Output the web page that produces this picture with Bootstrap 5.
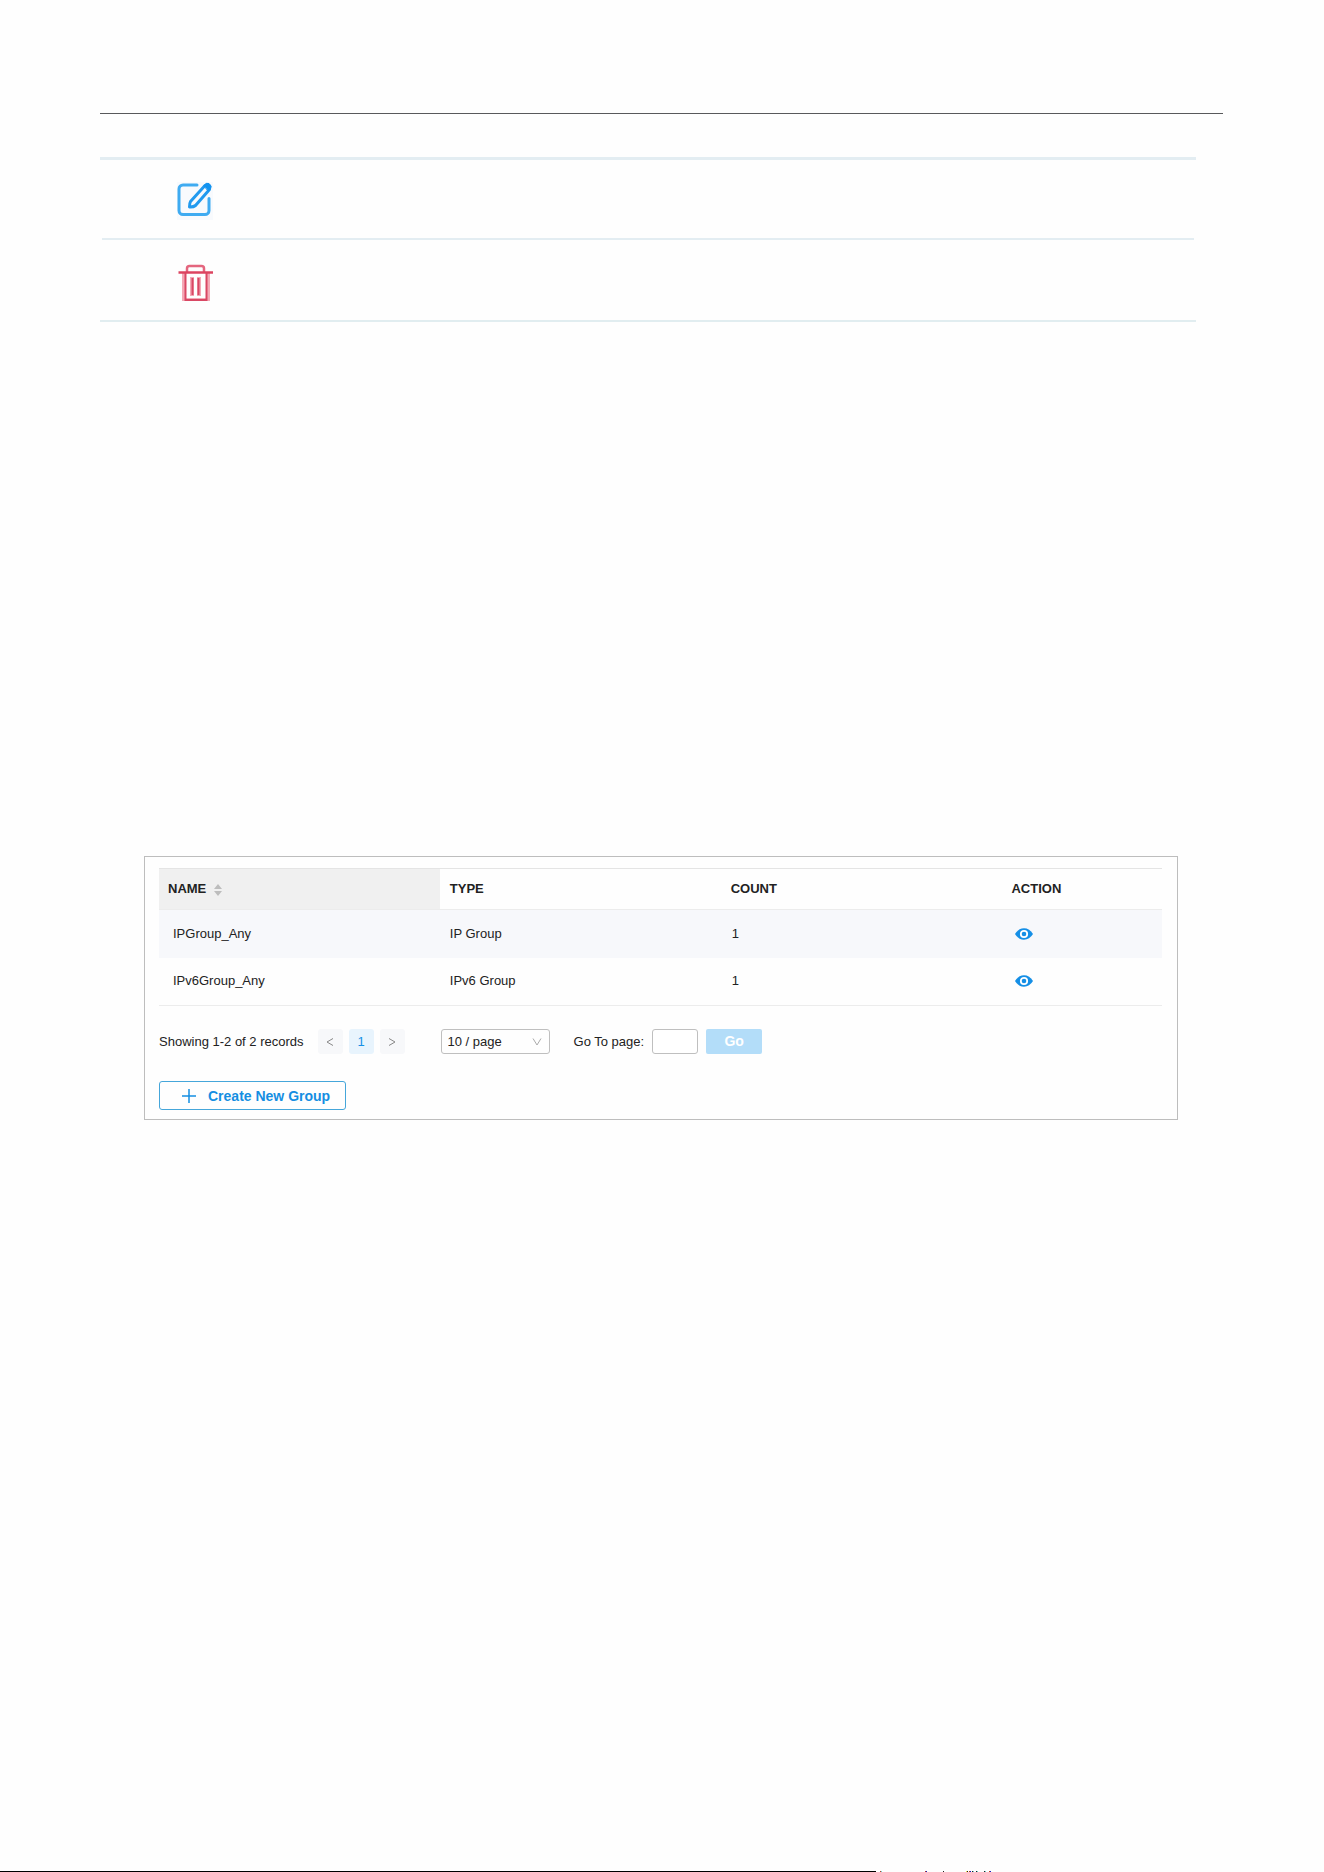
<!DOCTYPE html>
<html lang="en">
<head>
  <meta charset="UTF-8" />
  <meta name="viewport" content="width=device-width, initial-scale=1.0"/>
  <title>IP Groups</title>
  <link href="https://cdn.jsdelivr.net/npm/bootstrap@5.3.0/dist/css/bootstrap.min.css" rel="stylesheet">
  <style>
    body {
      font-family: "Liberation Sans", Arial, sans-serif;
      font-size: 13px;
      line-height: 20px;
      color: #222;
      background-color: #fefefe;
    }

    .page-body {
      padding: 113px 101px 0 100px;
    }

    .page-rule {
      height: 1px;
      background-color: #58595b;
      margin-bottom: 43px;
    }

    /* icon rows */
    .icon-rows {
      margin: 0 27px 0 0;
      border-top: 3px solid #e3edf2;
      border-bottom: 2px solid #e1edf0;
    }

    .icon-row {
      height: 80px;
      padding: 24px 0 0 77px;
    }

    .icon-row:first-child {
      height: 78px;
      padding-top: 22px;
    }

    .icon-divider {
      height: 2px;
      margin: 0 2px;
      background-color: #e3edf2;
    }

    .icon-btn {
      background: none;
      border: 0;
      padding: 0;
      line-height: 0;
    }

    /* group panel */
    .group-panel {
      margin: 534px 45px 0 44px;
      padding: 11px 15px 9px 14px;
      border: 1px solid #bdbdbd;
    }

    .group-table {
      table-layout: fixed;
      margin-bottom: 23px;
      border-top: 1px solid #e4e4e4;
    }

    .group-table > :not(caption) > * > * {
      padding: 0 10px;
      vertical-align: middle;
      color: #222;
      background-color: transparent;
      border-bottom: 0;
    }

    .group-table > thead th {
      height: 41px;
      width: 28%;
      border-bottom: 1px solid #ececec;
    }

    .group-table > thead th:first-child {
      padding-left: 9px;
      background-color: #f0f0f0;
    }

    .group-table > thead th:last-child {
      width: 16%;
    }

    .group-table > tbody td {
      height: 48px;
    }

    .group-table > tbody td:first-child {
      padding-left: 14px;
    }

    .group-table > tbody td:nth-child(3) {
      padding-left: 11px;
    }

    .group-table > tbody td:last-child {
      padding-left: 14px;
    }

    .group-table > tbody tr:first-child td {
      background-color: #f7f8fb;
    }

    .group-table > tbody tr:last-child td {
      border-bottom: 1px solid #ececec;
    }

    .group-table .icon-btn {
      display: block;
    }

    .pager {
      gap: 6px;
      margin-left: 14px;
    }

    .pager-btn {
      display: flex;
      align-items: center;
      justify-content: center;
      width: 25px;
      height: 25px;
      padding: 0;
      border: 0;
      border-radius: 3px;
      font-size: 13px;
      line-height: 25px;
      color: #888;
      background-color: #f7f8fa;
    }

    .pager-btn.current {
      color: #1791e6;
      background-color: #e8f4fd;
    }

    .page-size {
      width: 109px;
      height: 25px;
      margin-left: 36px;
      padding: 0 24px 0 6px;
      border: 1px solid #bfbfbf;
      border-radius: 3px;
      font-size: 13px;
      line-height: 23px;
      color: #222;
      appearance: none;
      background: transparent;
    }

    .size-caret {
      right: 8px;
      top: 9px;
      pointer-events: none;
    }

    .page-input {
      width: 46px;
      height: 25px;
      margin: 0 8px;
      padding: 0 6px;
      border: 1px solid #bfbfbf;
      border-radius: 3px;
      background-color: #fff;
    }

    .go-btn {
      width: 56px;
      height: 25px;
      padding: 0;
      border: 0;
      border-radius: 2px;
      font-size: 14px;
      line-height: 25px;
      color: #fff;
      background-color: #b3ddf9;
    }

    .create-btn {
      height: 29px;
      margin-top: 27px;
      padding: 0 15px 0 22px;
      border: 1px solid #45a6da;
      border-radius: 3px;
      font-size: 14px;
      color: #158ee2;
      background-color: transparent;
    }

    .foot-line {
      width: 66.2%;
      height: 1px;
      background-color: #000;
    }
  </style>
</head>
<body class="d-flex flex-column min-vh-100">

  <main class="page-body">
    <div class="page-rule"></div>

    <!-- Edit / delete icons -->
    <div class="icon-rows">
      <div class="icon-row d-flex align-items-start">
        <button type="button" class="icon-btn" aria-label="Edit">
          <svg width="36" height="38" viewBox="0 0 36 38" fill="none" stroke-linecap="round" stroke-linejoin="round">
            <rect width="36" height="38" fill="#f8fafd"/>
            <path d="M20 3H6a4 4 0 0 0-4 4v21.500a4 4 0 0 0 4 4h22a4 4 0 0 0 4-4V16.500" stroke="#3fabf1" stroke-width="3"/>
            <path d="M28 3.500L13.500 19.500Q12.500 21 12.500 25Q16.500 25.200 18.500 23.500L32.500 7.500" stroke="#219aef" stroke-width="3"/>
            <path d="M27 3.500Q29 0 32 1.500Q35.500 4 33.500 7L31.500 9Z" fill="#1293f0" stroke="#1293f0" stroke-width="1"/>
          </svg>
        </button>
      </div>
      <div class="icon-divider"></div>
      <div class="icon-row d-flex align-items-start">
        <button type="button" class="icon-btn" aria-label="Delete">
          <svg width="37" height="37" viewBox="0 0 37 37" fill="none">
            <path d="M7 9V36H31V9M15 13V32M22 13V32" stroke="#f4a9b6" stroke-width="4"/>
            <path d="M8.500 9V36H29.500V9M15.500 14V31M21.500 14V31" stroke="#d94864" stroke-width="2"/>
            <path d="M10 8V4.500Q10 2 12.500 2H24.500Q27 2 27 4.500V8" stroke="#e4667e" stroke-width="2.500"/>
            <path d="M1.500 8.500H36" stroke="#dc4460" stroke-width="2.500"/>
          </svg>
        </button>
      </div>
    </div>

    <!-- Group list -->
    <section class="group-panel">
      <table class="table group-table">
        <thead>
          <tr>
            <th scope="col">NAME
              <svg class="ms-1" width="8" height="12" viewBox="0 0 8 12" fill="#bdbdbd">
                <path d="M4 0L8 5H0ZM4 12L0 7H8Z"/>
              </svg>
            </th>
            <th scope="col">TYPE</th>
            <th scope="col">COUNT</th>
            <th scope="col">ACTION</th>
          </tr>
        </thead>
        <tbody>
          <tr>
            <td>IPGroup_Any</td>
            <td>IP Group</td>
            <td>1</td>
            <td>
              <button type="button" class="icon-btn" aria-label="View IPGroup_Any">
                <svg width="18" height="12" viewBox="0 0 18 12">
                  <path d="M0 6Q3.500 .3 9 .3T18 6Q14.500 11.700 9 11.700T0 6Z" fill="#158fe6"/>
                  <circle cx="9" cy="6" r="3.200" fill="#158fe6" stroke="#fff" stroke-width="1.800"/>
                </svg>
              </button>
            </td>
          </tr>
          <tr>
            <td>IPv6Group_Any</td>
            <td>IPv6 Group</td>
            <td>1</td>
            <td>
              <button type="button" class="icon-btn" aria-label="View IPv6Group_Any">
                <svg width="18" height="12" viewBox="0 0 18 12">
                  <path d="M0 6Q3.500 .3 9 .3T18 6Q14.500 11.700 9 11.700T0 6Z" fill="#158fe6"/>
                  <circle cx="9" cy="6" r="3.200" fill="#158fe6" stroke="#fff" stroke-width="1.800"/>
                </svg>
              </button>
            </td>
          </tr>
        </tbody>
      </table>

      <div class="d-flex align-items-center">
        <span>Showing 1-2 of 2 records</span>
        <nav class="pager d-flex" aria-label="Pages">
          <button type="button" class="pager-btn" aria-label="Previous">
            <svg width="8" height="8" viewBox="0 0 8 8" fill="none" stroke="#888"><path d="M7 .5L1 4L7 7.500"/></svg>
          </button>
          <button type="button" class="pager-btn current">1</button>
          <button type="button" class="pager-btn" aria-label="Next">
            <svg width="8" height="8" viewBox="0 0 8 8" fill="none" stroke="#888"><path d="M1 .5L7 4L1 7.500"/></svg>
          </button>
        </nav>
        <div class="position-relative d-flex">
          <select class="page-size" aria-label="Records per page">
            <option>10 / page</option>
          </select>
          <svg class="size-caret position-absolute" width="10" height="8" viewBox="0 0 10 8" fill="none" stroke="#aaa"><path d="M1 .5L5 7L9 .5"/></svg>
        </div>
        <label class="ms-4" for="goToPage">Go To page:</label>
        <input type="text" class="page-input" id="goToPage">
        <button type="button" class="go-btn fw-bold">Go</button>
      </div>

      <button type="button" class="create-btn fw-bold d-flex align-items-center">
        <svg class="me-2" width="14" height="14" viewBox="0 0 14 14" stroke="#158ee2" stroke-width="1.500"><path d="M7 0V14M0 7H14"/></svg>
        <span class="ms-1">Create New Group</span>
      </button>
    </section>
  </main>

  <!-- Bottom edge line with its small colour ticks -->
  <footer class="d-flex mt-auto">
    <div class="foot-line"></div>
    <svg width="120" height="1" viewBox="0 0 120 1" shape-rendering="crispEdges">
      <path d="M67 0h1v1h-1zM91 0h1v1h-1zM96 0h1v1h-1zM100 0h1v1h-1zM108 0h1v1h-1z" fill="#222"/>
      <path d="M4 0h1v1h-1zM49 0h1v1h-1zM93 0h1v1h-1zM113 0h1v1h-1z" fill="#b8402a"/>
      <path d="M50 0h1v1h-1zM94 0h1v1h-1zM114 0h1v1h-1z" fill="#2020c0"/>
      <path d="M5 0h1v1h-1zM97 0h1v1h-1zM101 0h1v1h-1zM109 0h1v1h-1z" fill="#6cd0d0"/>
      <path d="M90 0h1v1h-1z" fill="#f0e040"/>
    </svg>
  </footer>

  <script src="https://cdn.jsdelivr.net/npm/bootstrap@5.3.0/dist/js/bootstrap.bundle.min.js"></script>
</body>
</html>
